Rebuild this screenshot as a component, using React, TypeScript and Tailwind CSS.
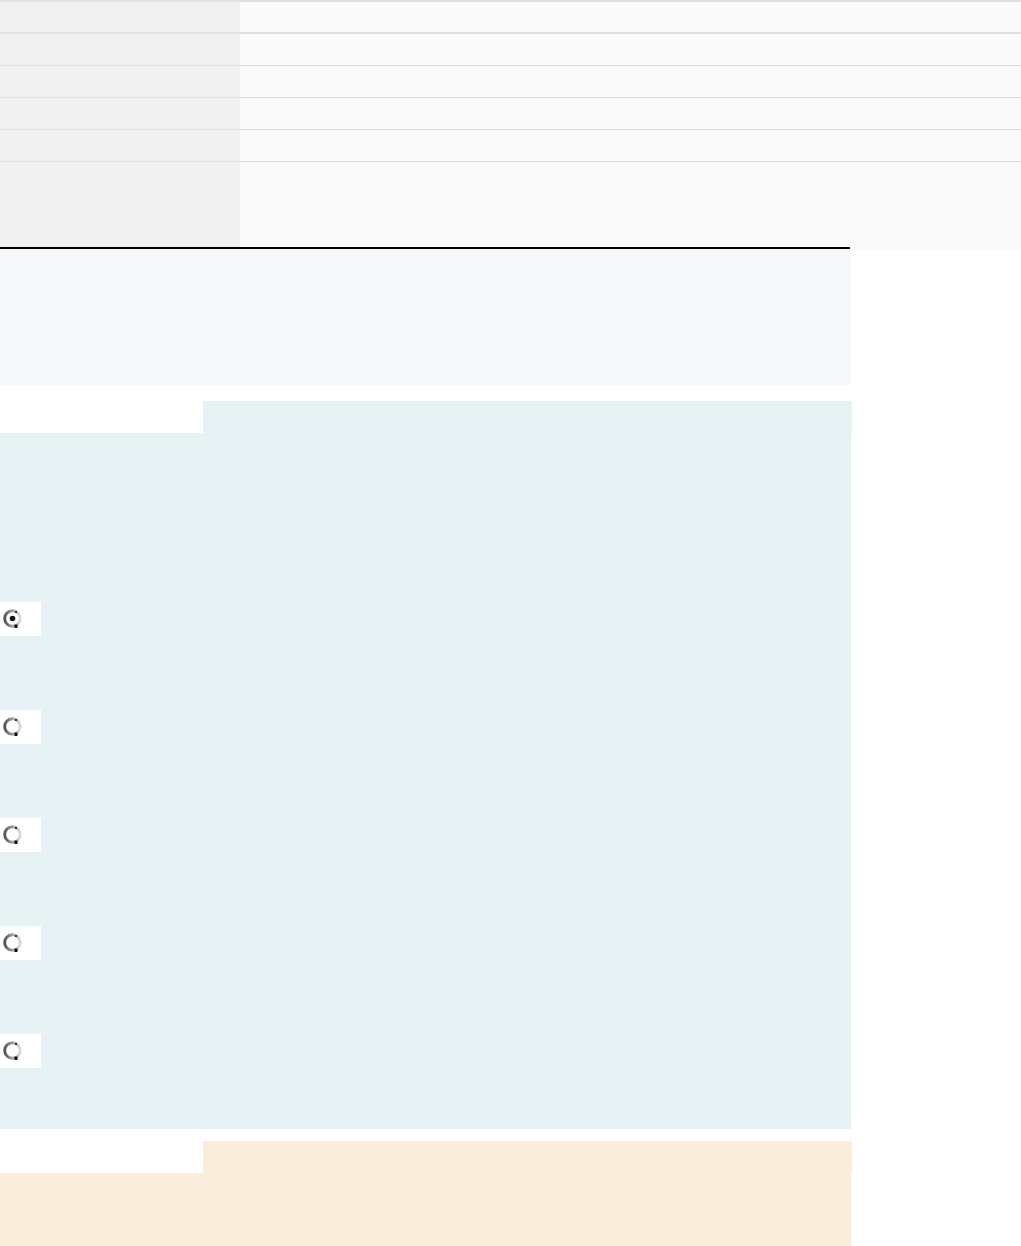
import React from "react";

function Radio({ checked }: { checked?: boolean }) {
  const id = checked ? "rg1" : "rg0";
  return (
    <div className="w-[41px] h-[34px] bg-white flex items-center pl-[2px]">
      <svg width="22" height="22" viewBox="0 0 22 22">
        <defs>
          <linearGradient id={id} x1="0" y1="0" x2="1" y2="0">
            <stop offset="0" stopColor="#555" />
            <stop offset="0.45" stopColor="#9a9a9a" />
            <stop offset="1" stopColor="#dcdcdc" />
          </linearGradient>
        </defs>
        <circle cx="10.5" cy="10.5" r="7.8" fill="none" stroke={`url(#${id})`} strokeWidth="3" />
        <rect x="13" y="3" width="2" height="2" fill="#333" />
        <rect x="12.5" y="16.5" width="3" height="3.5" fill="#111" />
        {checked && <circle cx="10.5" cy="10.5" r="2.8" fill="#111" />}
      </svg>
    </div>
  );
}

export default function App() {
  const rows = [31, 31, 31, 31];
  return (
    <div className="w-[1021px] bg-white font-['Liberation_Sans',sans-serif]">
      <div className="border-t-2 border-[#dde1e6]">
        <div className="flex h-[30px]">
          <div className="w-[240px] bg-[#f0f0f0]" />
          <div className="flex-1 bg-[#fafafa]" />
        </div>
        <div className="h-[2px] bg-[#dde1e6]" />
        {rows.map((h, i) => (
          <div key={i}>
            <div className="flex h-[31px]">
              <div className="w-[240px] bg-[#f0f0f0]" />
              <div className="flex-1 bg-[#fafafa]" />
            </div>
            <div className="h-px bg-[#e0e0e0]" />
          </div>
        ))}
        <div className="flex h-[87px]">
          <div className="w-[240px] bg-[#f0f0f0]" />
          <div className="flex-1 bg-[#fafafa]" />
        </div>
      </div>
      <div className="relative -mt-[2px] w-[851px]">
        <div className="h-[2px] w-[850px] bg-black" />
        <div className="h-[136px] bg-[#f7f8fa]" />
      </div>
      <div className="h-[16px]" />
      <div className="w-[852px]">
        <div className="flex h-[32px]">
          <div className="w-[203px]" />
          <div className="flex-1 bg-[#e6f2f4]" />
        </div>
        <div className="w-[851px] h-[696px] bg-[#e6f2f4] pt-[169px] flex flex-col gap-[74px]">
          <Radio checked />
          <Radio />
          <Radio />
          <Radio />
          <Radio />
        </div>
      </div>
      <div className="h-[12px]" />
      <div className="w-[852px]">
        <div className="flex h-[32px]">
          <div className="w-[203px]" />
          <div className="flex-1 bg-[#fbeddc]" />
        </div>
        <div className="w-[851px] h-[80px] bg-[#fbeddc]" />
      </div>
    </div>
  );
}
